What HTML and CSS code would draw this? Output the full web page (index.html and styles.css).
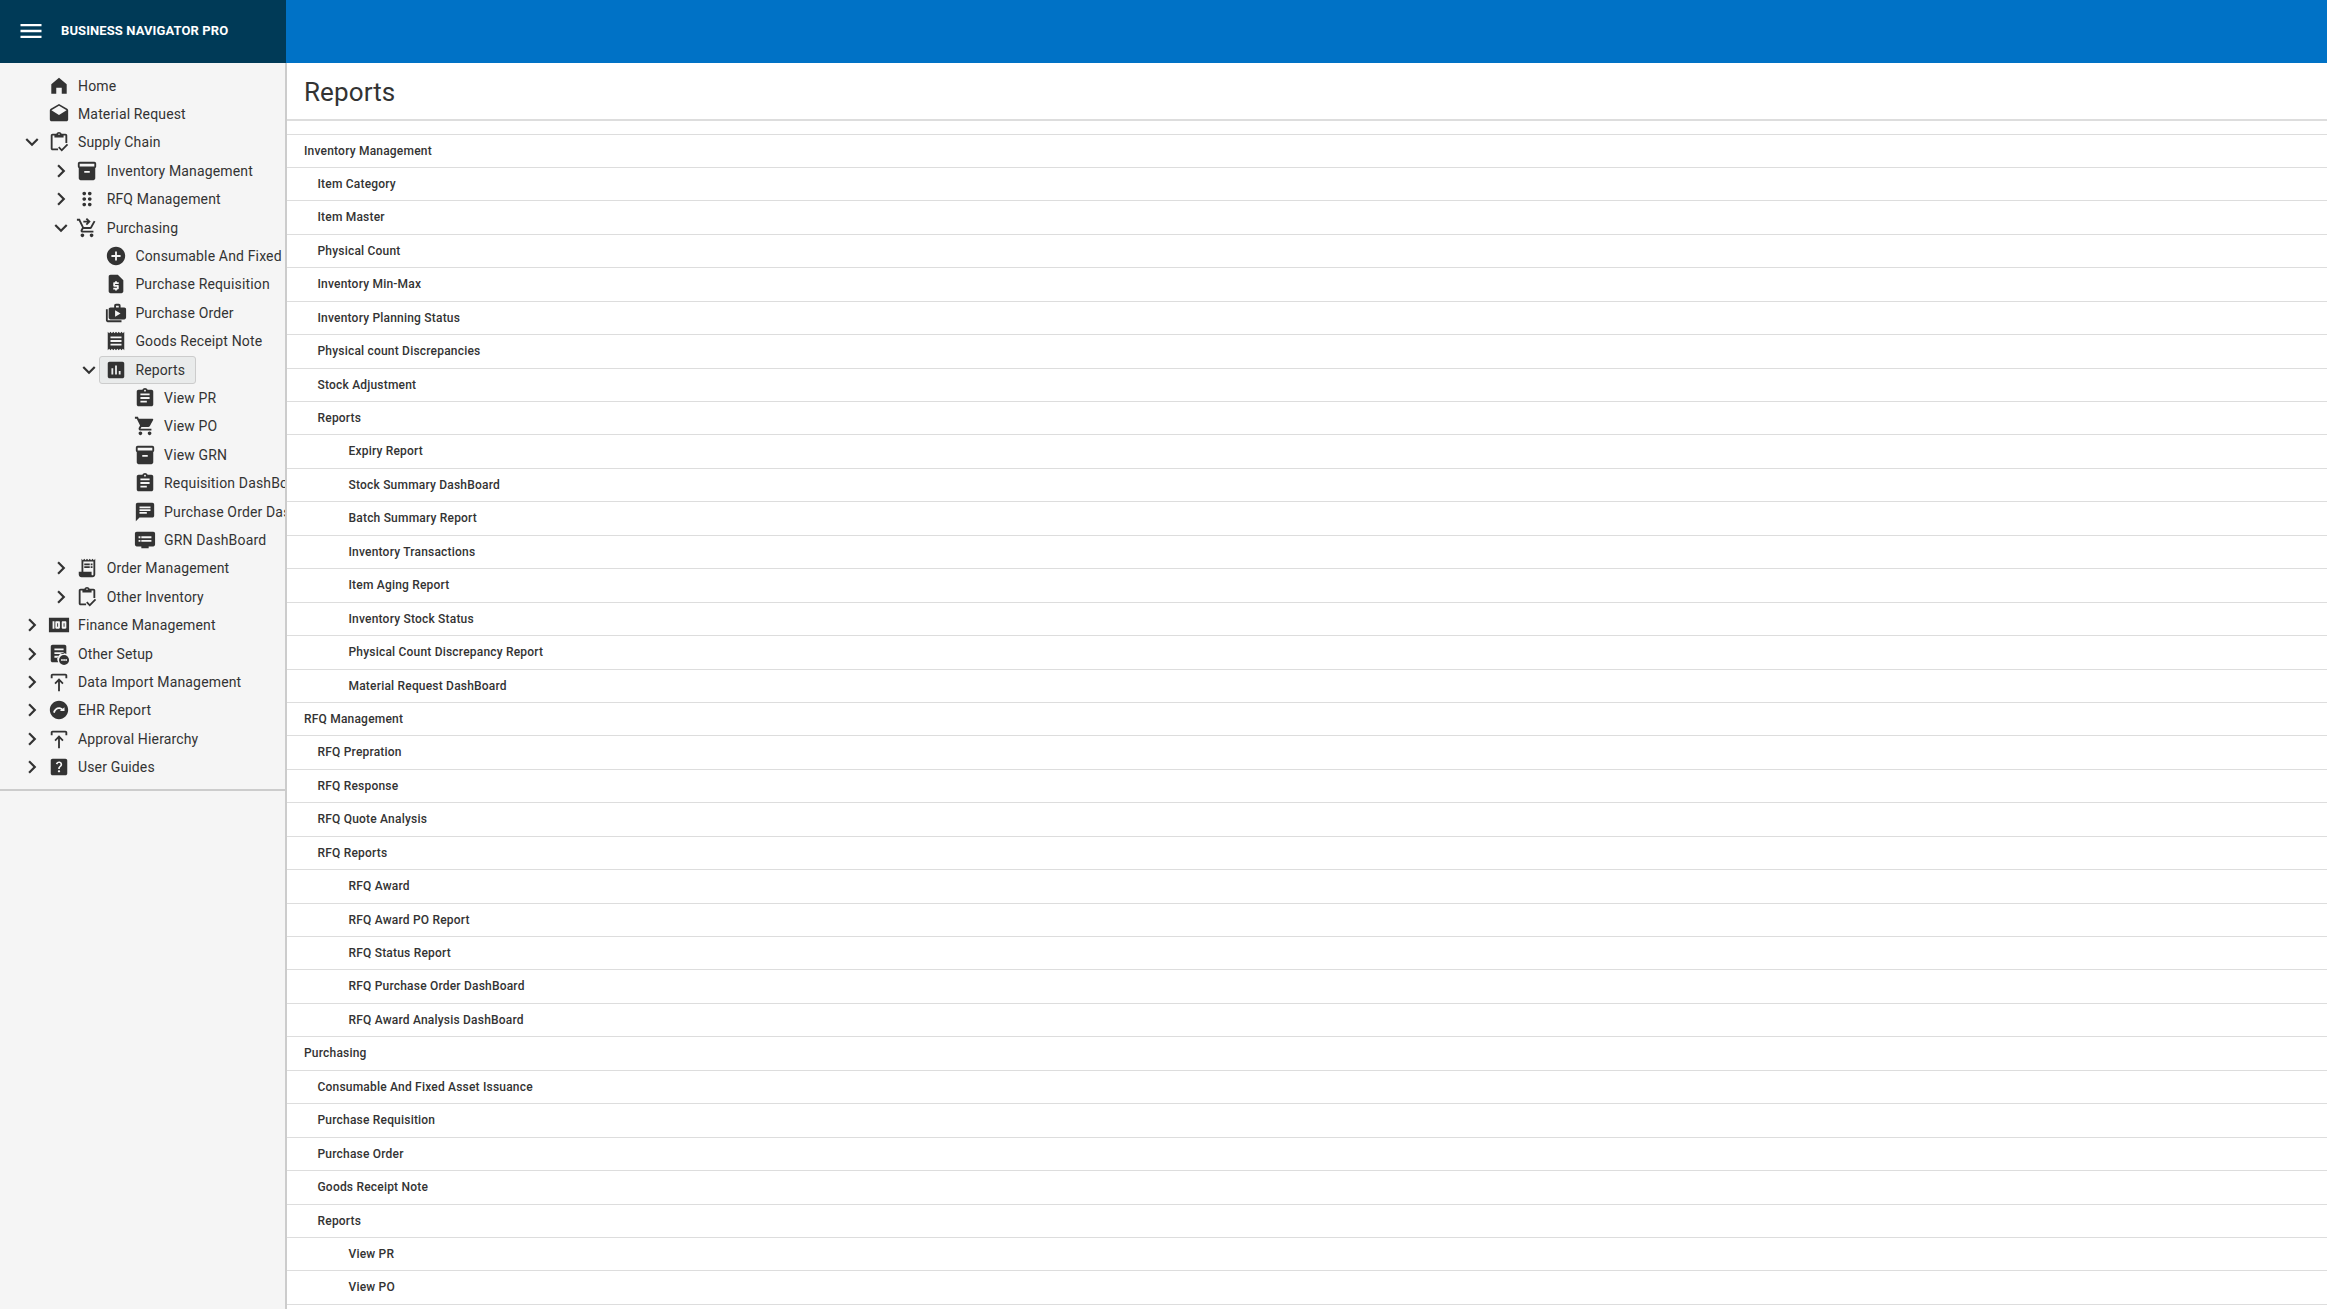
FILE: index.html
```html
<!DOCTYPE html>
<html lang="en">
<head>
    <meta charset="UTF-8">
    <meta name="viewport" content="width=device-width, initial-scale=1.0">
    <title>Reports</title>
    <link rel="stylesheet" href="styles.css">
</head>
<body>
    <svg class="sprites" xmlns="http://www.w3.org/2000/svg">
        <symbol id="i-right" viewBox="0 0 24 24"><path d="M10 6L8.59 7.41 13.17 12l-4.58 4.59L10 18l6-6z"/></symbol>
        <symbol id="i-down" viewBox="0 0 24 24"><path d="M16.59 8.59L12 13.17 7.41 8.59 6 10l6 6 6-6z"/></symbol>
        <symbol id="i-home" viewBox="0 0 24 24"><path d="M12 3l8.400 7v10.500h-5.400v-6.500H9v6.500H3.600V10z"/></symbol>
        <symbol id="i-drafts" viewBox="0 0 24 24"><path d="M21.99 8c0-.72-.37-1.35-.94-1.7L12 1 2.95 6.3C2.38 6.65 2 7.28 2 8v10c0 1.1.9 2 2 2h16c1.1 0 2-.9 2-2l-.01-10zM12 13L3.74 7.84 12 3l8.26 4.84L12 13z"/></symbol>
        <symbol id="i-turned-in" viewBox="0 0 24 24"><path d="M19 3h-4.18C14.4 1.84 13.3 1 12 1c-1.3 0-2.4.84-2.82 2H5c-1.1 0-2 .9-2 2v14c0 1.1.9 2 2 2h6v-2H5V5h2v2h10V5h2v8h2V5c0-1.1-.9-2-2-2zm-7 1.250c-.41 0-.75-.34-.75-.75s.34-.75.75-.75.75.34.75.75-.34.75-.75.75z"/><path d="M22 15.400l-1.400-1.400-5.600 5.600-2.600-2.600-1.400 1.400 4 4z"/></symbol>
        <symbol id="i-inventory" viewBox="0 0 24 24"><path d="M20 2H4c-1 0-2 .9-2 2v3.01c0 .72.43 1.34 1 1.69V20c0 1.1 1.1 2 2 2h14c.9 0 2-.9 2-2V8.7c.57-.35 1-.97 1-1.69V4c0-1.1-1-2-2-2zm-5 12H9v-2h6v2zm5-7H4V4l16-.02V7z"/></symbol>
        <symbol id="i-dots" viewBox="0 0 24 24"><path d="M11 18c0 1.1-.9 2-2 2s-2-.9-2-2 .9-2 2-2 2 .9 2 2zm-2-8c-1.1 0-2 .9-2 2s.9 2 2 2 2-.9 2-2-.9-2-2-2zm0-6c-1.1 0-2 .9-2 2s.9 2 2 2 2-.9 2-2-.9-2-2-2zm6 4c1.1 0 2-.9 2-2s-.9-2-2-2-2 .9-2 2 .9 2 2 2zm0 2c-1.1 0-2 .9-2 2s.9 2 2 2 2-.9 2-2-.9-2-2-2zm0 6c-1.1 0-2 .9-2 2s.9 2 2 2 2-.9 2-2-.9-2-2-2z"/></symbol>
        <symbol id="i-cart-in" viewBox="0 0 24 24"><path d="M7 18c-1.1 0-1.99.9-1.99 2S5.9 22 7 22s2-.9 2-2-.9-2-2-2zm10 0c-1.1 0-1.99.9-1.99 2s.89 2 1.99 2 2-.9 2-2-.9-2-2-2zm-9.83-3.25l.03-.12.9-1.63h7.45c.75 0 1.41-.41 1.75-1.03l3.86-7.01L19.42 4h-.01l-1.1 2-2.76 5H8.53l-.13-.27L6.16 6l-.95-2-.94-2H1v2h2l3.6 7.59-1.35 2.45c-.16.28-.25.61-.25.96 0 1.1.9 2 2 2h12v-2H7.42c-.13 0-.25-.11-.25-.25z"/><path d="M12 1l-1.41 1.41L12.17 4H8v2h4.17l-1.58 1.59L12 9l4-4z"/></symbol>
        <symbol id="i-add" viewBox="0 0 24 24"><path d="M12 2C6.48 2 2 6.48 2 12s4.48 10 10 10 10-4.48 10-10S17.52 2 12 2zm5 11h-4v4h-2v-4H7v-2h4V7h2v4h4v2z"/></symbol>
        <symbol id="i-quote" viewBox="0 0 24 24"><path d="M14 2H6c-1.1 0-1.99.9-1.99 2L4 20c0 1.1.89 2 1.99 2H18c1.1 0 2-.9 2-2V8l-6-6zm1 10h-4v1h3c.55 0 1 .45 1 1v3c0 .55-.45 1-1 1h-1v1h-2v-1H9v-2h4v-1h-3c-.55 0-1-.45-1-1v-3c0-.55.45-1 1-1h1V9h2v1h2v2z"/></symbol>
        <symbol id="i-case" viewBox="0 0 24 24"><path d="M3 8H1v12c0 1.1.9 2 2 2h15v-2H3V8z"/><path fill-rule="evenodd" d="M21 6h-4V4c0-1.1-.9-2-2-2h-3c-1.1 0-2 .9-2 2v2H6c-1.1 0-2 .9-2 2v9c0 1.1.9 2 2 2h15c1.1 0 2-.9 2-2V8c0-1.1-.9-2-2-2zM12 4h3v2h-3V4zm-1 5v7l6-3.5L11 9z"/></symbol>
        <symbol id="i-receipt" viewBox="0 0 24 24"><path d="M18 17H6v-2h12v2zm0-4H6v-2h12v2zm0-4H6V7h12v2zM3 22l1.5-1.5L6 22l1.5-1.5L9 22l1.5-1.5L12 22l1.5-1.5L15 22l1.5-1.5L18 22l1.5-1.5L21 22V2l-1.5 1.5L18 2l-1.5 1.5L15 2l-1.5 1.5L12 2l-1.5 1.5L9 2 7.5 3.5 6 2 4.5 3.5 3 2v20z"/></symbol>
        <symbol id="i-chart" viewBox="0 0 24 24"><path d="M19 3H5c-1.1 0-2 .9-2 2v14c0 1.1.9 2 2 2h14c1.1 0 2-.9 2-2V5c0-1.1-.9-2-2-2zM9 17H7v-7h2v7zm4 0h-2V7h2v10zm4 0h-2v-4h2v4z"/></symbol>
        <symbol id="i-assign" viewBox="0 0 24 24"><path d="M19 3h-4.18C14.4 1.84 13.3 1 12 1c-1.3 0-2.4.84-2.82 2H5c-1.1 0-2 .9-2 2v14c0 1.1.9 2 2 2h14c1.1 0 2-.9 2-2V5c0-1.1-.9-2-2-2zm-7 0c.55 0 1 .45 1 1s-.45 1-1 1-1-.45-1-1 .45-1 1-1zm2 14H7v-2h7v2zm3-4H7v-2h10v2zm0-4H7V7h10v2z"/></symbol>
        <symbol id="i-cart" viewBox="0 0 24 24"><path d="M7 18c-1.1 0-1.99.9-1.99 2S5.9 22 7 22s2-.9 2-2-.9-2-2-2zM1 2v2h2l3.6 7.59-1.35 2.45c-.16.28-.25.61-.25.96 0 1.1.9 2 2 2h12v-2H7.42c-.14 0-.25-.11-.25-.25l.03-.12.9-1.63h7.45c.75 0 1.41-.41 1.75-1.03l3.58-6.49c.08-.14.12-.31.12-.48 0-.55-.45-1-1-1H5.21l-.94-2H1zm16 16c-1.1 0-1.99.9-1.99 2s.89 2 1.99 2 2-.9 2-2-.9-2-2-2z"/></symbol>
        <symbol id="i-chat" viewBox="0 0 24 24"><path d="M20 2H4c-1.1 0-1.99.9-1.99 2L2 22l4-4h14c1.1 0 2-.9 2-2V4c0-1.1-.9-2-2-2zM6 9h12v2H6V9zm8 5H6v-2h8v2zm4-6H6V6h12v2z"/></symbol>
        <symbol id="i-dvr" viewBox="0 0 24 24"><path fill-rule="evenodd" d="M21 3H3c-1.1 0-2 .9-2 2v12c0 1.1.9 2 2 2h5v2h8v-2h5c1.1 0 1.99-.9 1.99-2L23 5c0-1.1-.9-2-2-2zM19 8H8v2h11V8zm0 4H8v2h11v-2zM7 8H5v2h2V8zm0 4H5v2h2v-2z"/></symbol>
        <symbol id="i-receipt-long" viewBox="0 0 24 24"><path d="M19.5 3.5L18 2l-1.5 1.5L15 2l-1.5 1.5L12 2l-1.5 1.5L9 2 7.5 3.5 6 2v14H3v3c0 1.66 1.34 3 3 3h12c1.66 0 3-1.34 3-3V2l-1.5 1.5zM19 19c0 .55-.45 1-1 1s-1-.45-1-1v-3H8V5h11v14z"/><path d="M9 7h6v2H9zM16 7h2v2h-2zM9 10h6v2H9zM16 10h2v2h-2z"/></symbol>
        <symbol id="i-money" viewBox="0 0 24 24"><path fill-rule="evenodd" d="M1 4h22v16H1V4zm4 4v8h2V8H5zm4 0c-.55 0-1 .45-1 1v6c0 .55.45 1 1 1h3c.55 0 1-.45 1-1V9c0-.55-.45-1-1-1H9zm1 2h1v4h-1v-4zm6-2c-.55 0-1 .45-1 1v6c0 .55.45 1 1 1h3c.55 0 1-.45 1-1V9c0-.55-.45-1-1-1h-3zm1 2h1v4h-1v-4z"/></symbol>
        <symbol id="i-setup" viewBox="0 0 24 24"><path fill-rule="evenodd" d="M5 2h13c1.1 0 2 .9 2 2v8.100a6.500 6.500 0 0 0-8.900 8.900H5c-1.100 0-2-.9-2-2V4c0-1.100.9-2 2-2zm2 4v2h10V6H7zm0 4v2h10v-2H7zm0 4v2h4v-2H7z"/><path fill-rule="evenodd" d="M17.500 13a5.500 5.500 0 1 1 0 11 5.500 5.500 0 0 1 0-11zM14.500 17.500v2h1.500v-2zM16.750 17.500v2h1.500v-2zM19 17.500v2h1.500v-2z"/></symbol>
        <symbol id="i-publish" viewBox="0 0 24 24"><path d="M5 3h14c1.1 0 2 .9 2 2v3h-2V5H5v3H3V5c0-1.1.9-2 2-2zM7 13l1.41 1.41L11 11.83V22h2V11.83l2.590 2.580L17 13l-5-5z"/></symbol>
        <symbol id="i-gauge" viewBox="0 0 24 24"><path fill-rule="evenodd" d="M12 2C6.480 2 2 6.480 2 12s4.480 10 10 10 10-4.480 10-10S17.520 2 12 2zM5.500 14.500l1.900.7C8.200 12.400 10 11 12 11c.9 0 1.700.3 2.400.8L13 13h5v-4l-2 1.600C14.900 9.600 13.500 9 12 9c-3 0-5.500 2.300-6.500 5.500z"/></symbol>
        <symbol id="i-help" viewBox="0 0 24 24"><path d="M19 3H5c-1.1 0-2 .9-2 2v14c0 1.1.89 2 2 2h14c1.1 0 2-.9 2-2V5c0-1.1-.9-2-2-2zm-6.990 15c-.7 0-1.260-.56-1.260-1.260 0-.71.56-1.250 1.260-1.250.71 0 1.250.54 1.250 1.250-.01.69-.54 1.260-1.250 1.260zm3.010-7.400c-.76 1.110-1.480 1.460-1.870 2.170-.16.29-.22.48-.22 1.410h-1.820c0-.49-.08-1.290.31-1.980.49-.87 1.420-1.390 1.960-2.160.57-.81.25-2.330-1.370-2.330-1.060 0-1.580.8-1.800 1.480l-1.650-.7C9.010 7.150 10.220 6 11.990 6c1.480 0 2.490.67 3.010 1.520.44.72.7 2.070.03 3.080z"/></symbol>
    </svg>

    <header class="topbar">
        <div class="brand">
            <svg class="menu-icon" viewBox="0 0 24 24"><path d="M3 18h18v-2H3v2zm0-5h18v-2H3v2zm0-5h18V6H3v2z"/></svg>
            <span class="brand-name">BUSINESS NAVIGATOR PRO</span>
        </div>
    </header>

    <div class="layout">
        <nav class="sidebar">
            <ul class="tree">
                <li class="node"><span class="toggle"></span><a class="node-content"><svg class="icon"><use href="#i-home"/></svg><span>Home</span></a></li>
                <li class="node"><span class="toggle"></span><a class="node-content"><svg class="icon"><use href="#i-drafts"/></svg><span>Material Request</span></a></li>
                <li class="node"><span class="toggle"><svg><use href="#i-down"/></svg></span><a class="node-content"><svg class="icon"><use href="#i-turned-in"/></svg><span>Supply Chain</span></a></li>
                <li>
                    <ul class="tree">
                        <li class="node"><span class="toggle"><svg><use href="#i-right"/></svg></span><a class="node-content"><svg class="icon"><use href="#i-inventory"/></svg><span>Inventory Management</span></a></li>
                        <li class="node"><span class="toggle"><svg><use href="#i-right"/></svg></span><a class="node-content"><svg class="icon"><use href="#i-dots"/></svg><span>RFQ Management</span></a></li>
                        <li class="node"><span class="toggle"><svg><use href="#i-down"/></svg></span><a class="node-content"><svg class="icon"><use href="#i-cart-in"/></svg><span>Purchasing</span></a></li>
                        <li>
                            <ul class="tree">
                                <li class="node"><span class="toggle"></span><a class="node-content"><svg class="icon"><use href="#i-add"/></svg><span>Consumable And Fixed Asset Issuance</span></a></li>
                                <li class="node"><span class="toggle"></span><a class="node-content"><svg class="icon"><use href="#i-quote"/></svg><span>Purchase Requisition</span></a></li>
                                <li class="node"><span class="toggle"></span><a class="node-content"><svg class="icon"><use href="#i-case"/></svg><span>Purchase Order</span></a></li>
                                <li class="node"><span class="toggle"></span><a class="node-content"><svg class="icon"><use href="#i-receipt"/></svg><span>Goods Receipt Note</span></a></li>
                                <li class="node"><span class="toggle"><svg><use href="#i-down"/></svg></span><a class="node-content selected"><svg class="icon"><use href="#i-chart"/></svg><span>Reports</span></a></li>
                                <li>
                                    <ul class="tree">
                                        <li class="node"><span class="toggle"></span><a class="node-content"><svg class="icon"><use href="#i-assign"/></svg><span>View PR</span></a></li>
                                        <li class="node"><span class="toggle"></span><a class="node-content"><svg class="icon"><use href="#i-cart"/></svg><span>View PO</span></a></li>
                                        <li class="node"><span class="toggle"></span><a class="node-content"><svg class="icon"><use href="#i-inventory"/></svg><span>View GRN</span></a></li>
                                        <li class="node"><span class="toggle"></span><a class="node-content"><svg class="icon"><use href="#i-assign"/></svg><span>Requisition DashBoard</span></a></li>
                                        <li class="node"><span class="toggle"></span><a class="node-content"><svg class="icon"><use href="#i-chat"/></svg><span>Purchase Order DashBoard</span></a></li>
                                        <li class="node"><span class="toggle"></span><a class="node-content"><svg class="icon"><use href="#i-dvr"/></svg><span>GRN DashBoard</span></a></li>
                                    </ul>
                                </li>
                            </ul>
                        </li>
                        <li class="node"><span class="toggle"><svg><use href="#i-right"/></svg></span><a class="node-content"><svg class="icon"><use href="#i-receipt-long"/></svg><span>Order Management</span></a></li>
                        <li class="node"><span class="toggle"><svg><use href="#i-right"/></svg></span><a class="node-content"><svg class="icon"><use href="#i-turned-in"/></svg><span>Other Inventory</span></a></li>
                    </ul>
                </li>
                <li class="node"><span class="toggle"><svg><use href="#i-right"/></svg></span><a class="node-content"><svg class="icon"><use href="#i-money"/></svg><span>Finance Management</span></a></li>
                <li class="node"><span class="toggle"><svg><use href="#i-right"/></svg></span><a class="node-content"><svg class="icon"><use href="#i-setup"/></svg><span>Other Setup</span></a></li>
                <li class="node"><span class="toggle"><svg><use href="#i-right"/></svg></span><a class="node-content"><svg class="icon"><use href="#i-publish"/></svg><span>Data Import Management</span></a></li>
                <li class="node"><span class="toggle"><svg><use href="#i-right"/></svg></span><a class="node-content"><svg class="icon"><use href="#i-gauge"/></svg><span>EHR Report</span></a></li>
                <li class="node"><span class="toggle"><svg><use href="#i-right"/></svg></span><a class="node-content"><svg class="icon"><use href="#i-publish"/></svg><span>Approval Hierarchy</span></a></li>
                <li class="node"><span class="toggle"><svg><use href="#i-right"/></svg></span><a class="node-content"><svg class="icon"><use href="#i-help"/></svg><span>User Guides</span></a></li>
            </ul>
        </nav>

        <main class="content">
            <h1 class="page-title">Reports</h1>
            <div class="report-list">
                <a class="row blank"></a>
                <a class="row">Inventory Management</a>
                <a class="row sub">Item Category</a>
                <a class="row sub">Item Master</a>
                <a class="row sub">Physical Count</a>
                <a class="row sub">Inventory Min-Max</a>
                <a class="row sub">Inventory Planning Status</a>
                <a class="row sub">Physical count Discrepancies</a>
                <a class="row sub">Stock Adjustment</a>
                <a class="row sub">Reports</a>
                <a class="row leaf">Expiry Report</a>
                <a class="row leaf">Stock Summary DashBoard</a>
                <a class="row leaf">Batch Summary Report</a>
                <a class="row leaf">Inventory Transactions</a>
                <a class="row leaf">Item Aging Report</a>
                <a class="row leaf">Inventory Stock Status</a>
                <a class="row leaf">Physical Count Discrepancy Report</a>
                <a class="row leaf">Material Request DashBoard</a>
                <a class="row">RFQ Management</a>
                <a class="row sub">RFQ Prepration</a>
                <a class="row sub">RFQ Response</a>
                <a class="row sub">RFQ Quote Analysis</a>
                <a class="row sub">RFQ Reports</a>
                <a class="row leaf">RFQ Award</a>
                <a class="row leaf">RFQ Award PO Report</a>
                <a class="row leaf">RFQ Status Report</a>
                <a class="row leaf">RFQ Purchase Order DashBoard</a>
                <a class="row leaf">RFQ Award Analysis DashBoard</a>
                <a class="row">Purchasing</a>
                <a class="row sub">Consumable And Fixed Asset Issuance</a>
                <a class="row sub">Purchase Requisition</a>
                <a class="row sub">Purchase Order</a>
                <a class="row sub">Goods Receipt Note</a>
                <a class="row sub">Reports</a>
                <a class="row leaf">View PR</a>
                <a class="row leaf">View PO</a>
            </div>
        </main>
    </div>
</body>
</html>
```

FILE: styles.css
```css
html, body {
    height: 100%;
}

body {
    margin: 0;
    font-family: 'Roboto', sans-serif;
    color: #333;
    background: #fff;
    overflow: hidden;
}

.sprites {
    display: none;
}

.topbar {
    height: 63px;
    background: #0072c6;
}

.brand {
    width: 286px;
    height: 100%;
    display: flex;
    align-items: center;
    padding: 0 0 2px 17px;
    box-sizing: border-box;
    background: #003a57;
}

.menu-icon {
    width: 28px;
    height: 28px;
    fill: #fff;
    flex: none;
}

.brand-name {
    margin-left: 16px;
    font-size: 13px;
    font-weight: 700;
    letter-spacing: .1px;
    color: #fff;
}

.layout {
    display: flex;
    height: calc(100vh - 63px);
}

/* side menu */
.sidebar {
    width: 285px;
    flex: none;
    background: #f5f5f5;
    border-right: 2px solid #ccc;
    padding-top: 8.5px;
    overflow: hidden;
}

.sidebar > .tree {
    padding-bottom: 8px;
    border-bottom: 2px solid #ccc;
}

.tree {
    list-style: none;
    margin: 0;
    padding: 0;
}

.tree .tree {
    margin-left: 28.7px;
}

.node {
    height: 28.4px;
    display: flex;
    align-items: center;
    padding-left: 19px;
    font-size: 14px;
    letter-spacing: .15px;
    white-space: nowrap;
}

.toggle {
    width: 26px;
    height: 26px;
    flex: none;
}

.toggle svg {
    display: block;
    width: 26px;
    height: 26px;
    fill: #333;
}

.node-content {
    display: flex;
    align-items: center;
    height: 28px;
    padding: 0 10px 0 4.5px;
    box-sizing: border-box;
    border: 1px solid transparent;
    border-radius: 3px;
    margin-left: -3px;
}

.node-content.selected {
    background: #e9ebeb;
    border-color: #ccc;
}

.icon {
    width: 22px;
    height: 22px;
    flex: none;
    margin-right: 8.5px;
    fill: #333;
}

/* main panel */
.content {
    flex: 1;
    min-width: 0;
}

.page-title {
    margin: 0;
    height: 56px;
    padding-left: 17px;
    font-size: 26px;
    font-weight: 400;
    line-height: 58px;
    letter-spacing: .1px;
    border-bottom: 2px solid #ddd;
}

.report-list {
    display: flex;
    flex-direction: column;
}

.row {
    height: 33.45px;
    flex: none;
    box-sizing: border-box;
    padding-left: 17px;
    border-bottom: 1px solid #ddd;
    font-size: 12px;
    font-weight: 500;
    letter-spacing: .2px;
    line-height: 33px;
}

.row.blank {
    height: 13.5px;
}

.row.sub {
    padding-left: 30.5px;
}

.row.leaf {
    padding-left: 61.5px;
}
```
